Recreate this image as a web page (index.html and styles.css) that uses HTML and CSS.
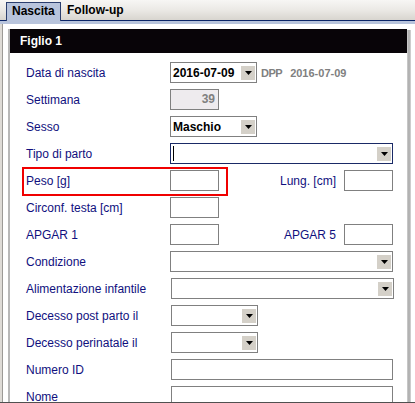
FILE: index.html
```html
<!DOCTYPE html>
<html lang="it">
<head>
<meta charset="utf-8">
<title>Nascita</title>
<link rel="stylesheet" href="styles.css">
</head>
<body>
<div class="window">
  <div class="tabbar">
    <div class="tab tab-active">Nascita</div>
    <div class="tab">Follow-up</div>
  </div>
  <div class="tabline"></div>
  <div class="content">
    <div class="panel">
      <div class="panel-head">Figlio 1</div>
      <div class="form">
        <div class="row">
          <div class="label">Data di nascita</div>
          <div class="field">
            <div class="select select-short"><span class="val">2016-07-09</span><span class="btn"><svg width="7" height="4" viewBox="0 0 7 4"><polygon points="0,0 7,0 3.5,4" fill="#000"/></svg></span></div>
            <span class="dpp">DPP</span><span class="dpp-date">2016-07-09</span>
          </div>
        </div>
        <div class="row">
          <div class="label">Settimana</div>
          <div class="field"><div class="input input-small input-readonly">39</div></div>
        </div>
        <div class="row">
          <div class="label">Sesso</div>
          <div class="field">
            <div class="select select-short"><span class="val">Maschio</span><span class="btn"><svg width="7" height="4" viewBox="0 0 7 4"><polygon points="0,0 7,0 3.5,4" fill="#000"/></svg></span></div>
          </div>
        </div>
        <div class="row">
          <div class="label">Tipo di parto</div>
          <div class="field">
            <div class="select select-wide select-focus"><span class="val"><span class="caret"></span></span><span class="btn"><svg width="7" height="4" viewBox="0 0 7 4"><polygon points="0,0 7,0 3.5,4" fill="#000"/></svg></span></div>
          </div>
        </div>
        <div class="row row-marked">
          <div class="label">Peso [g]</div>
          <div class="field field-pair">
            <div class="input input-small"></div>
            <div class="pair-label">Lung. [cm]</div>
            <div class="input input-small"></div>
          </div>
          <div class="mark"></div>
        </div>
        <div class="row">
          <div class="label">Circonf. testa [cm]</div>
          <div class="field"><div class="input input-small"></div></div>
        </div>
        <div class="row">
          <div class="label">APGAR 1</div>
          <div class="field field-pair">
            <div class="input input-small"></div>
            <div class="pair-label">APGAR 5</div>
            <div class="input input-small"></div>
          </div>
        </div>
        <div class="row">
          <div class="label">Condizione</div>
          <div class="field">
            <div class="select select-wide"><span class="val"></span><span class="btn"><svg width="7" height="4" viewBox="0 0 7 4"><polygon points="0,0 7,0 3.5,4" fill="#000"/></svg></span></div>
          </div>
        </div>
        <div class="row">
          <div class="label">Alimentazione infantile</div>
          <div class="field field-shift">
            <div class="select select-wide"><span class="val"></span><span class="btn"><svg width="7" height="4" viewBox="0 0 7 4"><polygon points="0,0 7,0 3.5,4" fill="#000"/></svg></span></div>
          </div>
        </div>
        <div class="row">
          <div class="label">Decesso post parto il</div>
          <div class="field field-shift">
            <div class="select select-short"><span class="val"></span><span class="btn"><svg width="7" height="4" viewBox="0 0 7 4"><polygon points="0,0 7,0 3.5,4" fill="#000"/></svg></span></div>
          </div>
        </div>
        <div class="row">
          <div class="label">Decesso perinatale il</div>
          <div class="field field-shift">
            <div class="select select-short"><span class="val"></span><span class="btn"><svg width="7" height="4" viewBox="0 0 7 4"><polygon points="0,0 7,0 3.5,4" fill="#000"/></svg></span></div>
          </div>
        </div>
        <div class="row">
          <div class="label">Numero ID</div>
          <div class="field field-shift"><div class="input input-wide"></div></div>
        </div>
        <div class="row">
          <div class="label">Nome</div>
          <div class="field field-shift"><div class="input input-wide"></div></div>
        </div>
      </div>
    </div>
    <div class="panel-shadow"></div>
  </div>
</div>
</body>
</html>
```

FILE: styles.css
```css
* {
  box-sizing: border-box;
}

html, body {
  margin: 0;
  padding: 0;
  background: #ffffff;
}

body {
  font-family: "Liberation Sans", Arial, sans-serif;
  font-size: 12px;
}

.window {
  width: 415px;
  height: 403px;
  overflow: hidden;
  display: flex;
  flex-direction: column;
  border-bottom: 1px solid #505050;
}

/* tab strip */
.tabbar {
  height: 21px;
  flex: none;
  display: flex;
  align-items: flex-end;
  padding-left: 6px;
  background: linear-gradient(to bottom, #f7f6f4 0%, #ebe9e5 50%, #d8d5cf 100%);
  border-bottom: 1px solid #0a2468;
}

.tab {
  height: 18px;
  padding: 0 4px 0 5px;
  font-weight: bold;
  color: #000;
  line-height: 17px;
  margin-right: 1px;
}

.tab-active {
  width: 55px;
  background: #b8c4dc;
  border: 1px solid #2c3f6e;
  border-bottom: none;
  height: 19px;
  margin-bottom: -1px;
}

.tabline {
  height: 3px;
  flex: none;
  background: #b8c4dc;
}

/* body of the tab */
.content {
  flex: 1;
  display: flex;
  align-items: flex-start;
  padding-top: 5px;
  padding-left: 8px;
  background: linear-gradient(to right, #dedbd6 0 2px, #9c9a96 2px 3px, #ffffff 3px);
  min-height: 0;
}

.panel {
  width: 399px;
  align-self: stretch;
  border-left: 2px solid #b0b0b0;
  background: #fff;
  border-left-color: #b8b8b8;
}

.panel-shadow {
  width: 4px;
  align-self: stretch;
  margin-top: 1px;
  background: linear-gradient(to right, #d0d0d0, #a8a8a8 50%, #d8d8d8);
}

.panel-head {
  height: 24px;
  background: #080408;
  color: #fff;
  font-weight: bold;
  line-height: 24px;
  padding-left: 10px;
}

.form {
  padding: 6px 14px 0 16px;
}

.row {
  position: relative;
  height: 27px;
  display: flex;
  align-items: center;
}

.label {
  width: 144px;
  flex: none;
  color: #10107e;
  white-space: nowrap;
}

.field {
  display: flex;
  align-items: center;
}

.field-shift {
  padding-left: 1px;
}

.field-pair {
  width: 223px;
}

.pair-label {
  flex: 1;
  text-align: right;
  padding-right: 8px;
  color: #10107e;
}

/* text boxes */
.input {
  height: 21px;
  border: 1px solid #808080;
  background: #fff;
}

.input-small {
  width: 49px;
}

.input-wide {
  width: 222px;
}

.input-readonly {
  background: #eeebee;
  color: #808080;
  font-weight: bold;
  text-align: right;
  padding-right: 3px;
  line-height: 19px;
}

/* combo boxes */
.select {
  height: 21px;
  border: 1px solid #808080;
  background: #fff;
  display: flex;
  align-items: center;
}

.select-short {
  width: 87px;
}

.select-wide {
  width: 223px;
}

.select-focus {
  border-color: #1a2a66;
}

.select .val {
  flex: 1;
  padding-left: 2px;
  font-weight: bold;
  color: #000;
  display: flex;
  align-items: center;
}

.select .btn {
  width: 14px;
  height: 14px;
  margin-right: 1px;
  background: #d4d0c8;
  display: flex;
  align-items: center;
  justify-content: center;
}

.caret {
  width: 1px;
  height: 15px;
  background: #000;
}

.dpp,
.dpp-date {
  color: #808080;
  font-weight: bold;
  font-size: 11px;
}

.dpp {
  margin-left: 4px;
  margin-right: 8px;
  letter-spacing: -0.5px;
}

/* highlight frame around the weight row */
.mark {
  position: absolute;
  left: -4px;
  top: 0;
  width: 206px;
  height: 29px;
  border: 2px solid #f00000;
  pointer-events: none;
}
```
